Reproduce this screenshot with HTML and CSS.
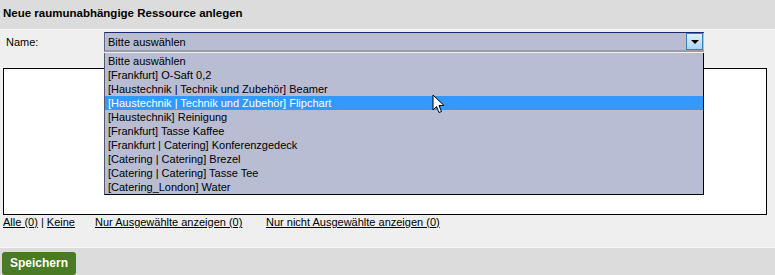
FILE: index.html
```html
<!DOCTYPE html>
<html>
<head>
    <title>Neue raumunabhängige Ressource anlegen</title>
    <link rel="stylesheet" href="styles.css">
</head>
<body>
    <div class="panel-head">
        <h3>Neue raumunabhängige Ressource anlegen</h3>
    </div>
    <div class="panel-body">
        <div class="field-row">
            <label class="field-label">Name:</label>
            <div class="combo">
                <div class="combo-value">
                    <span>Bitte auswählen</span>
                    <span class="combo-arrow"></span>
                </div>
                <ul class="combo-list">
                    <li>Bitte auswählen</li>
                    <li>[Frankfurt] O-Saft 0,2</li>
                    <li>[Haustechnik | Technik und Zubehör] Beamer</li>
                    <li class="active">[Haustechnik | Technik und Zubehör] Flipchart
                        <svg class="cursor" width="14" height="20" viewBox="0 0 14 20">
                            <path d="M1 1 L1 16 L4.5 12.5 L7 18.5 L9.5 17.5 L7 11.5 L12 11.5 Z" fill="#fff" stroke="#000" stroke-width="1"/>
                        </svg>
                    </li>
                    <li>[Haustechnik] Reinigung</li>
                    <li>[Frankfurt] Tasse Kaffee</li>
                    <li>[Frankfurt | Catering] Konferenzgedeck</li>
                    <li>[Catering | Catering] Brezel</li>
                    <li>[Catering | Catering] Tasse Tee</li>
                    <li>[Catering_London] Water</li>
                </ul>
            </div>
        </div>
        <div class="resource-box"></div>
        <div class="link-row">
            <span><a href="#">Alle (0)</a> | <a href="#">Keine</a></span>
            <a href="#">Nur Ausgewählte anzeigen (0)</a>
            <a href="#">Nur nicht Ausgewählte anzeigen (0)</a>
        </div>
    </div>
    <div class="panel-foot">
        <button class="save-btn">Speichern</button>
    </div>
</body>
</html>
```

FILE: styles.css
```css
body {
    margin: 0;
    width: 775px;
    height: 275px;
    overflow: hidden;
    font-family: 'Liberation Sans', Arial, sans-serif;
    font-size: 11px;
    color: #000;
    background: #efefef;
}

.panel-head {
    height: 29px;
    background: #dcdcdc;
    border-bottom: 1px solid #f7f7f7;
    display: flex;
    align-items: center;
    padding-left: 3px;
}

h3 {
    margin: 0;
    font-size: 11.5px;
    font-weight: 700;
    position: relative;
    top: -2px;
}

.panel-body {
    padding: 2px 0 0;
    height: 215px;
}

.field-row {
    display: flex;
    align-items: flex-start;
    height: 20px;
}

.field-label {
    width: 98px;
    padding: 4px 0 0 6px;
}

/* fake select, open */
.combo {
    position: relative;
    width: 600px;
}

.combo-value {
    height: 17px;
    background: #b8bdd3;
    border-top: 1px solid #1a2a70;
    border-left: 1px solid #5a6690;
    border-bottom: 2px solid #9a9ca4;
    display: flex;
    align-items: center;
    justify-content: space-between;
    padding-left: 3px;
}

.combo-arrow {
    width: 15px;
    height: 15px;
    margin-right: 1px;
    border: 1px solid #3c7fb1;
    background: linear-gradient(#dff0fc, #a8d6f6);
    position: relative;
}

.combo-arrow:after {
    content: "";
    position: absolute;
    left: 4px;
    top: 6px;
    border-left: 4px solid transparent;
    border-right: 4px solid transparent;
    border-top: 4px solid #000;
}

.combo-list {
    position: absolute;
    z-index: 2;
    top: 21px;
    left: 0;
    width: 598px;
    margin: 0;
    padding: 1px 0 0;
    list-style: none;
    background: #b8bdd3;
    border-left: 1px solid #55586a;
    border-right: 1px solid #000;
    border-bottom: 1px solid #000;
}

.combo-list li {
    height: 14px;
    line-height: 14px;
    padding-left: 3px;
    white-space: nowrap;
    position: relative;
}

.combo-list li.active {
    background: #3399ff;
    color: #fff;
}

.cursor {
    position: absolute;
    left: 327px;
    top: -2px;
}

.resource-box {
    margin: 16px 0 0 3px;
    width: 762px;
    height: 145px;
    background: #fff;
    border: 1px solid #000;
}

.link-row {
    display: flex;
    padding: 1px 0 0 3px;
}

.link-row a {
    color: #000;
}

.link-row > :nth-child(1) {
    width: 92px;
}

.link-row > :nth-child(2) {
    width: 171px;
}

.panel-foot {
    height: 30px;
    background: #dcdcdc;
    border-top: 1px solid #f7f7f7;
    display: flex;
    align-items: center;
    padding-left: 2px;
}

.save-btn {
    height: 23px;
    padding: 0 8px;
    border: none;
    border-radius: 3px;
    background: #4a7a23;
    color: #fff;
    font-family: 'Liberation Sans', Arial, sans-serif;
    font-size: 12px;
    font-weight: 700;
    cursor: pointer;
}
```
